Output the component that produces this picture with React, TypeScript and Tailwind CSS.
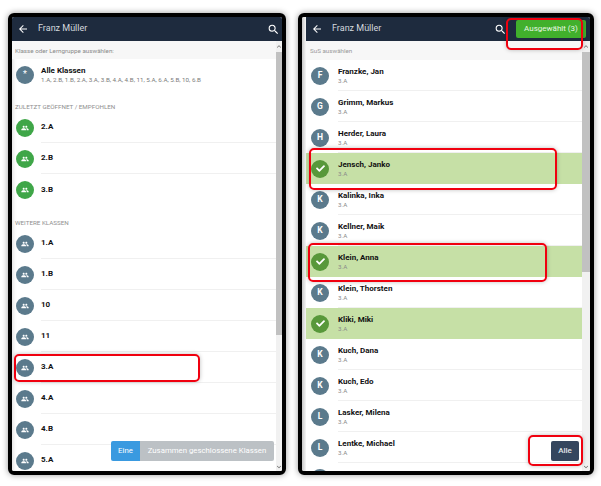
import { FaCheck } from "react-icons/fa";
import { MdArrowBack, MdGroup, MdSearch, MdKeyboardArrowUp, MdKeyboardArrowDown } from "react-icons/md";

const font = "font-['Roboto',sans-serif]";

const recent = ["2.A", "2.B", "3.B"];
const others = ["1.A", "1.B", "10", "11", "3.A", "4.A", "4.B", "5.A"];

const pupils = [
  { name: "Franzke, Jan", letter: "F" },
  { name: "Grimm, Markus", letter: "G" },
  { name: "Herder, Laura", letter: "H" },
  { name: "Jensch, Janko", letter: "J", selected: true },
  { name: "Kalinka, Inka", letter: "K" },
  { name: "Kellner, Maik", letter: "K" },
  { name: "Klein, Anna", letter: "K", selected: true },
  { name: "Klein, Thorsten", letter: "K" },
  { name: "Kliki, Miki", letter: "K", selected: true },
  { name: "Kuch, Dana", letter: "K" },
  { name: "Kuch, Edo", letter: "K" },
  { name: "Lasker, Milena", letter: "L" },
  { name: "Lentke, Michael", letter: "L" },
];

function Header({ children, search }: { children?: React.ReactNode; search: string }) {
  return (
    <div className="flex h-[24px] shrink-0 items-center bg-[#1e2b3e] pl-[4px] text-white">
      <MdArrowBack size={12} className="mx-[1px]" />
      <span className="ml-[8px] flex-1 text-[9px] text-[#d5d9de]">Franz Müller</span>
      <MdSearch size={13} className={search} />
      {children}
    </div>
  );
}

function Scrollbar({ thumb, width }: { thumb: string; width: string }) {
  return (
    <div className={`flex shrink-0 flex-col items-center bg-[#f1f1f1] text-[#555555] ${width}`}>
      <MdKeyboardArrowUp size={8} className="h-[11px] shrink-0" />
      <div className={`w-full bg-[#c1c1c1] ${thumb}`} />
      <div className="flex-1" />
      <MdKeyboardArrowDown size={8} className="h-[8px] shrink-0" />
    </div>
  );
}

function ClassRow({ label, color, last }: { label: string; color: string; last?: boolean }) {
  return (
    <div className="flex h-[31px] shrink-0 items-center pl-[4px]">
      <div className={`flex size-[18px] shrink-0 items-center justify-center rounded-full text-white ${color}`}>
        <MdGroup size={8} />
      </div>
      <div className={`ml-[7px] flex h-full flex-1 items-center text-[8px] font-bold text-[#111111] ${last ? "" : "border-b border-[#f0f0f0]"}`}>
        {label}
      </div>
    </div>
  );
}

function SectionTitle({ text, height }: { text: string; height: string }) {
  return <div className={`flex shrink-0 items-end pl-[3px] text-[6.25px] text-[#8f8f8f] ${height}`}>{text}</div>;
}

function PupilRow({ name, letter, selected }: { name: string; letter: string; selected?: boolean }) {
  return (
    <div className={`flex h-[31px] shrink-0 items-center pl-[5px] ${selected ? "bg-[#c6e0a6]" : ""}`}>
      <div className={`flex size-[18px] shrink-0 items-center justify-center rounded-full text-[8.5px] font-bold text-white ${selected ? "bg-[#58983a]" : "bg-[#5b7a8c]"}`}>
        {selected ? <FaCheck size={9} /> : letter}
      </div>
      <div className={`ml-[9px] flex h-full flex-1 flex-col justify-center ${selected ? "" : "border-b border-[#f0f0f0]"}`}>
        <span className="text-[8px] leading-[11px] font-bold text-[#111111]">{name}</span>
        <span className="text-[6.25px] leading-[8px] text-[#8a8a8a]">3.A</span>
      </div>
    </div>
  );
}

function Mark({ className }: { className: string }) {
  return <div className={`absolute rounded-[5px] border-2 border-[#f0000f] shadow-[0_0_4px_rgba(0,0,0,0.25)] ${className}`} />;
}

export default function App() {
  return (
    <div className={`relative flex h-[486px] w-[601px] gap-[12px] overflow-hidden bg-white pt-[13px] pl-[8px] ${font}`}>
      {/* Klassenauswahl */}
      <div className="relative flex h-[462px] w-[278px] shrink-0 flex-col overflow-hidden rounded-[6px] border-4 border-black shadow-[0_0_6px_rgba(0,0,0,0.4)]">
        <Header search="mr-[2px]" />
        <div className="flex min-h-0 flex-1 bg-white">
          <div className="flex min-w-0 flex-1 flex-col overflow-hidden shadow-[inset_4px_0_4px_-3px_rgba(0,0,0,0.15)]">
            <div className="flex h-[18px] shrink-0 items-center bg-[#f7f7f7] pt-[3px] pl-[3px] text-[6.25px] text-[#8a8a8a]">
              Klasse oder Lerngruppe auswählen:
            </div>
            <div className="flex h-[32px] shrink-0 items-center pl-[4px]">
              <div className="flex size-[18px] shrink-0 items-center justify-center rounded-full bg-[#5b7a8c] text-[9px] text-white">*</div>
              <div className="ml-[7px] flex flex-col">
                <span className="text-[8px] leading-[10px] font-bold text-[#111111]">Alle Klassen</span>
                <span className="text-[6.25px] leading-[8px] text-[#7a7a7a]">1.A, 2.B, 1.B, 2.A, 3.A, 3.B, 4.A, 4.B, 11, 5.A, 6.A, 5.B, 10, 6.B</span>
              </div>
            </div>
            <SectionTitle text="ZULETZT GEÖFFNET / EMPFOHLEN" height="h-[21px]" />
            {recent.map((c, i) => (
              <ClassRow key={c} label={c} color="bg-[#3fa648]" last={i === recent.length - 1} />
            ))}
            <SectionTitle text="WEITERE KLASSEN" height="h-[23px]" />
            {others.map((c) => (
              <ClassRow key={c} label={c} color="bg-[#5b7a8c]" />
            ))}
          </div>
          <Scrollbar thumb="h-[283px]" width="w-[6px]" />
        </div>
        <div className="absolute right-[8px] bottom-[10px] flex h-[20px] w-[163px] overflow-hidden rounded-[2px] text-[7.8px] text-white">
          <div className="flex w-[29px] items-center justify-center bg-[#3a9ae0]">Eine</div>
          <div className="flex flex-1 items-center justify-center bg-[#bcc1c5]">Zusammen geschlossene Klassen</div>
        </div>
      </div>

      {/* Schülerauswahl */}
      <div className="relative flex h-[462px] w-[296px] shrink-0 overflow-hidden rounded-[6px] border-4 border-black shadow-[0_0_6px_rgba(0,0,0,0.4)]">
        <div className="w-[4px] shrink-0 bg-linear-to-r from-[#c8c8c8] to-[#f6f6f6]" />
        <div className="flex min-w-0 flex-1 flex-col">
          <Header search="mr-[9px]">
            <div className="mr-[4px] flex h-[18px] w-[70px] items-center justify-center rounded-[2px] bg-[#41b02c] text-[8px] text-[#e8f6e2]">
              Ausgewählt (3)
            </div>
          </Header>
          <div className="flex min-h-0 flex-1 bg-white">
            <div className="flex min-w-0 flex-1 flex-col overflow-hidden">
              <div className="flex h-[19px] shrink-0 items-center bg-[#f7f7f7] pt-[2px] pl-[4px] text-[6.25px] text-[#9a9a9a]">SuS auswählen</div>
              {pupils.map((p) => (
                <PupilRow key={p.name} {...p} />
              ))}
              <div className="flex h-[31px] shrink-0 pl-[5px]">
                <div className="size-[18px] shrink-0 translate-y-[6px] rounded-full bg-[#5b7a8c]" />
              </div>
            </div>
            <Scrollbar thumb="h-[220px]" width="w-[8px]" />
          </div>
        </div>
        <div className="absolute right-[11px] bottom-[10px] flex h-[20px] w-[28px] items-center justify-center rounded-[2px] bg-[#34465e] text-[8px] font-medium text-[#e3e6ea]">
          Alle
        </div>
      </div>

      {/* Markierungen */}
      <Mark className="top-[354px] left-[14px] h-[28px] w-[186px]" />
      <Mark className="top-[18px] left-[506px] h-[32px] w-[77px]" />
      <Mark className="top-[148px] left-[309px] h-[42px] w-[248px]" />
      <Mark className="top-[243px] left-[308px] h-[39px] w-[239px]" />
      <Mark className="top-[435px] left-[528px] h-[31px] w-[55px]" />
    </div>
  );
}
